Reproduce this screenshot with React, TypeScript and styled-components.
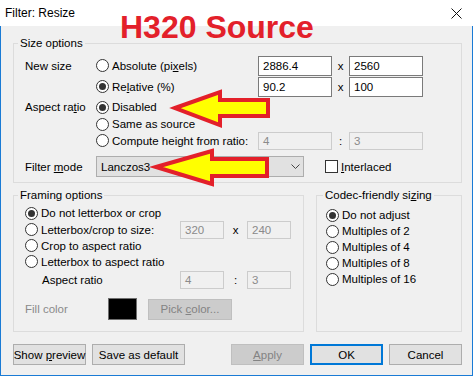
import React from "react";
import styled, { createGlobalStyle } from "styled-components";

const GlobalStyle = createGlobalStyle`
  html, body {
    margin: 0;
    padding: 0;
    background: #ffffff;
  }
  body {
    font-family: "Liberation Sans", Arial, sans-serif;
    font-size: 11px;
    color: #000000;
  }
`;

const Window = styled.div`
  position: relative;
  width: 473px;
  display: flex;
  flex-direction: column;
`;

const TitleBar = styled.div`
  height: 26px;
  flex: none;
  background: #ffffff;
  display: flex;
  align-items: center;
  justify-content: space-between;
  padding: 0 11px 0 5px;
  font-size: 12px;
`;

const Body = styled.div`
  background: #f0f0f0;
  border: 1px solid #1a7bd5;
  border-top: none;
  padding: 10px 10px 10px 12px;
  display: flex;
  flex-direction: column;
`;

const Group = styled.fieldset<{ $pad: string; $width?: number }>`
  margin: 0;
  min-width: 0;
  border: 1px solid #dcdcdc;
  padding: ${(p) => p.$pad};
  ${(p) => (p.$width ? `width: ${p.$width}px; flex: none;` : "flex: 1;")}
  box-sizing: border-box;
`;

const Legend = styled.legend<{ $shift: number }>`
  padding: 0 2px;
  margin-left: ${(p) => p.$shift}px;
  line-height: 15px;
  font-size: 11.5px;
`;

const SizeGrid = styled.div`
  display: grid;
  grid-template-columns: 71px 162px 74px 17px 74px;
  grid-template-rows: 21px 21px 20px 14px 19px;
  align-items: center;
`;

const FramingGrid = styled.div`
  display: grid;
  grid-template-columns: 155px 44px 23px 44px;
  grid-template-rows: 16px 17px 15px 17px 19px;
  align-items: center;
`;

const CodecList = styled.div`
  display: grid;
  grid-auto-rows: 16px;
  align-items: center;
`;

const FieldLabel = styled.span<{ $col?: number; $indent?: number; $muted?: boolean; $width?: number }>`
  grid-column: ${(p) => p.$col ?? 1};
  padding-left: ${(p) => p.$indent ?? 0}px;
  color: ${(p) => (p.$muted ? "#8a8a8a" : "#000000")};
  font-size: 11.5px;
  white-space: nowrap;
  ${(p) => (p.$width ? `width: ${p.$width}px; flex: none;` : "")}
`;

const RadioRow = styled.label<{ $col?: number }>`
  grid-column: ${(p) => p.$col ?? 1};
  display: flex;
  align-items: center;
  white-space: nowrap;
  font-size: 11.5px;
`;

const Circle = styled.span<{ $on?: boolean }>`
  width: 13px;
  height: 13px;
  box-sizing: border-box;
  border: 1px solid #333333;
  border-radius: 50%;
  background: #ffffff;
  margin-right: 3px;
  flex: none;
  display: grid;
  place-items: center;
  &::after {
    content: "";
    width: 7px;
    height: 7px;
    border-radius: 50%;
    background: ${(p) => (p.$on ? "#333333" : "transparent")};
  }
`;

const TextBox = styled.div<{ $off?: boolean }>`
  height: ${(p) => (p.$off ? 18 : 20)}px;
  box-sizing: border-box;
  border: 1px solid ${(p) => (p.$off ? "#cccccc" : "#7a7a7a")};
  background: ${(p) => (p.$off ? "#f0f0f0" : "#ffffff")};
  color: ${(p) => (p.$off ? "#8a8a8a" : "#000000")};
  display: flex;
  align-items: center;
  padding-left: 4px;
  font-size: 11.5px;
`;

const Sep = styled.span`
  text-align: center;
  font-size: 11.5px;
`;

const FilterRow = styled.div`
  display: flex;
  align-items: center;
  height: 21px;
  margin-top: 6px;
`;

const Combo = styled.div`
  width: 208px;
  height: 21px;
  box-sizing: border-box;
  background: #e1e1e1;
  border: 1px solid #adadad;
  display: flex;
  align-items: center;
  justify-content: space-between;
  padding: 0 3px 0 4px;
  font-size: 11.5px;
`;

const CheckRow = styled.label`
  display: flex;
  align-items: center;
  margin-left: 21px;
  font-size: 11.5px;
`;

const Box = styled.span`
  width: 13px;
  height: 13px;
  box-sizing: border-box;
  border: 1px solid #333333;
  background: #ffffff;
  margin-right: 3px;
`;

const GroupRow = styled.div`
  display: flex;
  gap: 12px;
  margin-top: 5px;
`;

const FillRow = styled.div`
  display: flex;
  align-items: center;
  margin-top: 9px;
  height: 22px;
`;

const Swatch = styled.span`
  width: 29px;
  height: 22px;
  box-sizing: border-box;
  background: #000000;
  border: 1px solid #6f6f6f;
  margin-right: 11px;
  flex: none;
`;

const ButtonBar = styled.div`
  display: flex;
  gap: 6px;
  margin-top: 12px;
`;

const Button = styled.div<{ $w: number; $off?: boolean; $focus?: boolean; $push?: boolean }>`
  width: ${(p) => p.$w}px;
  height: 21px;
  box-sizing: border-box;
  display: flex;
  align-items: center;
  justify-content: center;
  font-size: 11.5px;
  white-space: pre;
  background: ${(p) => (p.$off ? "#cccccc" : "#e1e1e1")};
  color: ${(p) => (p.$off ? "#838383" : "#000000")};
  border: 1px solid ${(p) => (p.$focus ? "#0078d7" : p.$off ? "#bfbfbf" : "#adadad")};
  ${(p) => (p.$focus ? "box-shadow: inset 0 0 0 1px #0078d7;" : "")}
  ${(p) => (p.$push ? "margin-left: auto;" : "")}
`;

const Stamp = styled.div`
  position: absolute;
  left: 120px;
  top: 11px;
  font-family: "Liberation Sans", Arial, sans-serif;
  font-weight: bold;
  font-size: 32px;
  line-height: 32px;
  color: #e3202a;
  pointer-events: none;
`;

const Overlay = styled.svg`
  position: absolute;
  left: 0;
  top: 0;
  pointer-events: none;
`;

const Radio = ({ on, col, children }: { on?: boolean; col?: number; children: React.ReactNode }) => (
  <RadioRow $col={col}>
    <Circle $on={on} />
    <span>{children}</span>
  </RadioRow>
);

export default function App() {
  return (
    <>
      <GlobalStyle />
      <Window>
        <TitleBar>
          <span>Filter: Resize</span>
          <svg width="11" height="11" viewBox="0 0 11 11">
            <path d="M0.5 0.5 L10.5 10.5 M10.5 0.5 L0.5 10.5" stroke="#111" strokeWidth="1" fill="none" />
          </svg>
        </TitleBar>
        <Body>
          <Group $pad="4px 0 5px 11px">
            <Legend $shift={-7}>Size options</Legend>
            <SizeGrid>
              <FieldLabel>New size</FieldLabel>
              <Radio col={2}>
                Absolute (pi<u>x</u>els)
              </Radio>
              <TextBox>2886.4</TextBox>
              <Sep>x</Sep>
              <TextBox>2560</TextBox>

              <Radio on col={2}>
                Re<u>l</u>ative (%)
              </Radio>
              <TextBox>90.2</TextBox>
              <Sep>x</Sep>
              <TextBox>100</TextBox>

              <FieldLabel>
                Aspect ra<u>t</u>io
              </FieldLabel>
              <Radio on col={2}>
                Disabled
              </Radio>

              <Radio col={2}>Same as source</Radio>

              <Radio col={2}>Compute height from ratio:</Radio>
              <TextBox $off>4</TextBox>
              <Sep>:</Sep>
              <TextBox $off>3</TextBox>
            </SizeGrid>
            <FilterRow>
              <FieldLabel $width={71}>
                Filter <u>m</u>ode
              </FieldLabel>
              <Combo>
                <span>Lanczos3</span>
                <svg width="9" height="6" viewBox="0 0 9 6">
                  <path d="M0.5 0.5 L4.5 4.5 L8.5 0.5" stroke="#444" strokeWidth="1" fill="none" />
                </svg>
              </Combo>
              <CheckRow>
                <Box />
                <span>
                  <u>I</u>nterlaced
                </span>
              </CheckRow>
            </FilterRow>
          </Group>

          <GroupRow>
            <Group $pad="2px 0 11px 11px" $width={291}>
              <Legend $shift={-7}>Framing options</Legend>
              <FramingGrid>
                <Radio on>Do not letterbox or crop</Radio>
                <Radio>Letterbox/crop to size:</Radio>
                <TextBox $off>320</TextBox>
                <Sep>x</Sep>
                <TextBox $off>240</TextBox>
                <Radio>Crop to aspect ratio</Radio>
                <Radio>Letterbox to aspect ratio</Radio>
                <FieldLabel $indent={17}>Aspect ratio</FieldLabel>
                <TextBox $off>4</TextBox>
                <Sep>:</Sep>
                <TextBox $off>3</TextBox>
              </FramingGrid>
              <FillRow>
                <FieldLabel $muted $width={83}>
                  Fill color
                </FieldLabel>
                <Swatch />
                <Button $w={84} $off>
                  <span>
                    Pick <u>c</u>olor...
                  </span>
                </Button>
              </FillRow>
            </Group>

            <Group $pad="4px 0 8px 9px">
              <Legend $shift={-3}>
                Codec-friendly si<u>z</u>ing
              </Legend>
              <CodecList>
                <Radio on>Do not adjust</Radio>
                <Radio>Multiples of 2</Radio>
                <Radio>Multiples of 4</Radio>
                <Radio>Multiples of 8</Radio>
                <Radio>Multiples of 16</Radio>
              </CodecList>
            </Group>
          </GroupRow>

          <ButtonBar>
            <Button $w={73}>
              <span>
                Show <u>p</u>review
              </span>
            </Button>
            <Button $w={93}>Save as default</Button>
            <Button $w={73} $off $push>
              <span>
                <u>A</u>pply
              </span>
            </Button>
            <Button $w={73} $focus>
              OK
            </Button>
            <Button $w={73}>Cancel</Button>
          </ButtonBar>
        </Body>

        <Stamp>H320 Source</Stamp>
        <Overlay width="473" height="380" viewBox="0 0 473 380">
          <path
            d="M175 108 L220 92 L220 100 L268 100 L268 116 L220 116 L220 125 Z"
            fill="#ffff00"
            stroke="#e3202a"
            strokeWidth="4"
            strokeLinejoin="miter"
          />
          <path
            d="M156 167 L212 151 L212 159 L267 159 L267 176 L212 176 L212 184 Z"
            fill="#ffff00"
            stroke="#e3202a"
            strokeWidth="4"
            strokeLinejoin="miter"
          />
        </Overlay>
      </Window>
    </>
  );
}
